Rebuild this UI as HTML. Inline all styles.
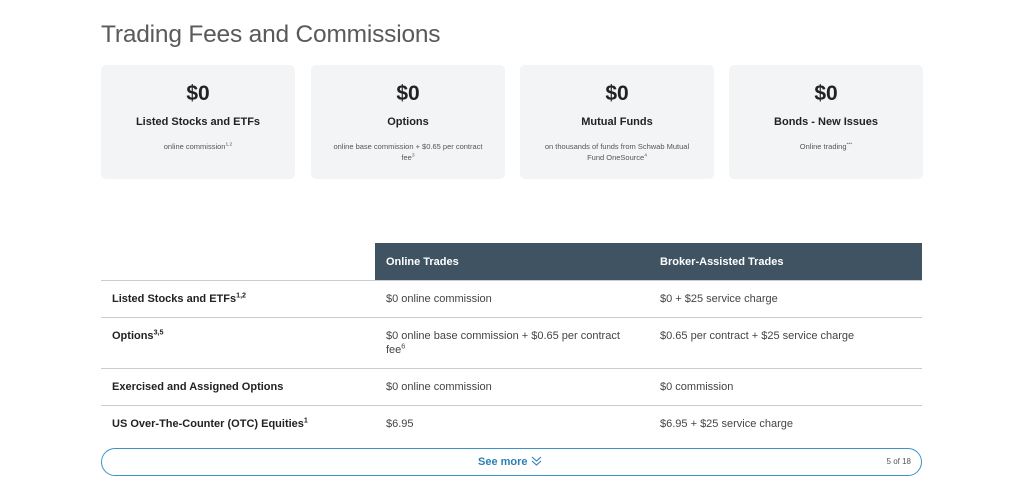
<!DOCTYPE html>
<html><head><style>
*{margin:0;padding:0;box-sizing:border-box}
body{width:1024px;height:499px;background:#fff;font-family:"Liberation Sans",sans-serif;color:#333;position:relative;overflow:hidden}
h1{position:absolute;left:101px;top:21px;font-weight:normal;font-size:24.5px;color:#5a5a5a;letter-spacing:-0.2px}
.card{position:absolute;top:65px;width:194px;height:114px;background:#f3f4f6;border-radius:5px;text-align:center}
.card .big{margin-top:17px;font-size:21px;font-weight:bold;color:#222}
.card .t{margin-top:10px;font-size:11px;font-weight:bold;color:#222}
.card .s{margin:13px 16px 0;font-size:7.5px;color:#555;line-height:11px}
sup{font-size:65%;line-height:0}
.hdr{position:absolute;left:375px;top:243px;width:547px;height:37px;background:#3f5363;color:#fff;font-size:11px;font-weight:bold}
.hdr span{position:absolute;top:13px}
.line{position:absolute;left:101px;width:821px;height:1px;background:#c8ccd0}
.c{position:absolute;font-size:11px;color:#444;line-height:14px}
.b{font-weight:bold;color:#222;left:112px}
.btn{position:absolute;left:101px;top:448px;width:821px;height:28px;border:1.5px solid #3a94c8;border-radius:14px}
.btn .m{position:absolute;left:376px;top:7px;font-size:11px;font-weight:bold;color:#2e80b4}
.btn .n{position:absolute;right:10px;top:8px;font-size:8px;color:#555}
</style></head><body>
<h1>Trading Fees and Commissions</h1>
<div class="card" style="left:101px"><div class="big">$0</div><div class="t">Listed Stocks and ETFs</div><div class="s">online commission<sup>1,2</sup></div></div>
<div class="card" style="left:311px"><div class="big">$0</div><div class="t">Options</div><div class="s">online base commission + $0.65 per contract fee<sup>3</sup></div></div>
<div class="card" style="left:520px"><div class="big">$0</div><div class="t">Mutual Funds</div><div class="s">on thousands of funds from Schwab Mutual Fund OneSource<sup>4</sup></div></div>
<div class="card" style="left:729px"><div class="big">$0</div><div class="t">Bonds - New Issues</div><div class="s">Online trading<sup>***</sup></div></div>
<div class="hdr"><span style="left:11px">Online Trades</span><span style="left:285px">Broker-Assisted Trades</span></div>
<div class="line" style="top:280px"></div>
<div class="line" style="top:317px"></div>
<div class="line" style="top:368px"></div>
<div class="line" style="top:405px"></div>
<div class="c b" style="top:292px">Listed Stocks and ETFs<sup>1,2</sup></div>
<div class="c" style="left:386px;top:292px">$0 online commission</div>
<div class="c" style="left:660px;top:292px">$0 + $25 service charge</div>
<div class="c b" style="top:329px">Options<sup>3,5</sup></div>
<div class="c" style="left:386px;top:329px;width:255px">$0 online base commission + $0.65 per contract fee<sup>6</sup></div>
<div class="c" style="left:660px;top:329px">$0.65 per contract + $25 service charge</div>
<div class="c b" style="top:380px">Exercised and Assigned Options</div>
<div class="c" style="left:386px;top:380px">$0 online commission</div>
<div class="c" style="left:660px;top:380px">$0 commission</div>
<div class="c b" style="top:417px">US Over-The-Counter (OTC) Equities<sup>1</sup></div>
<div class="c" style="left:386px;top:417px">$6.95</div>
<div class="c" style="left:660px;top:417px">$6.95 + $25 service charge</div>
<div class="btn"><span class="m">See more <svg width="11" height="10" viewBox="0 0 11 10" style="vertical-align:-1px"><path d="M1 1l4.5 4 4.5-4M1 5l4.5 4 4.5-4" fill="none" stroke="#2e80b4" stroke-width="1.1"/></svg></span><span class="n">5 of 18</span></div>
</body></html>
